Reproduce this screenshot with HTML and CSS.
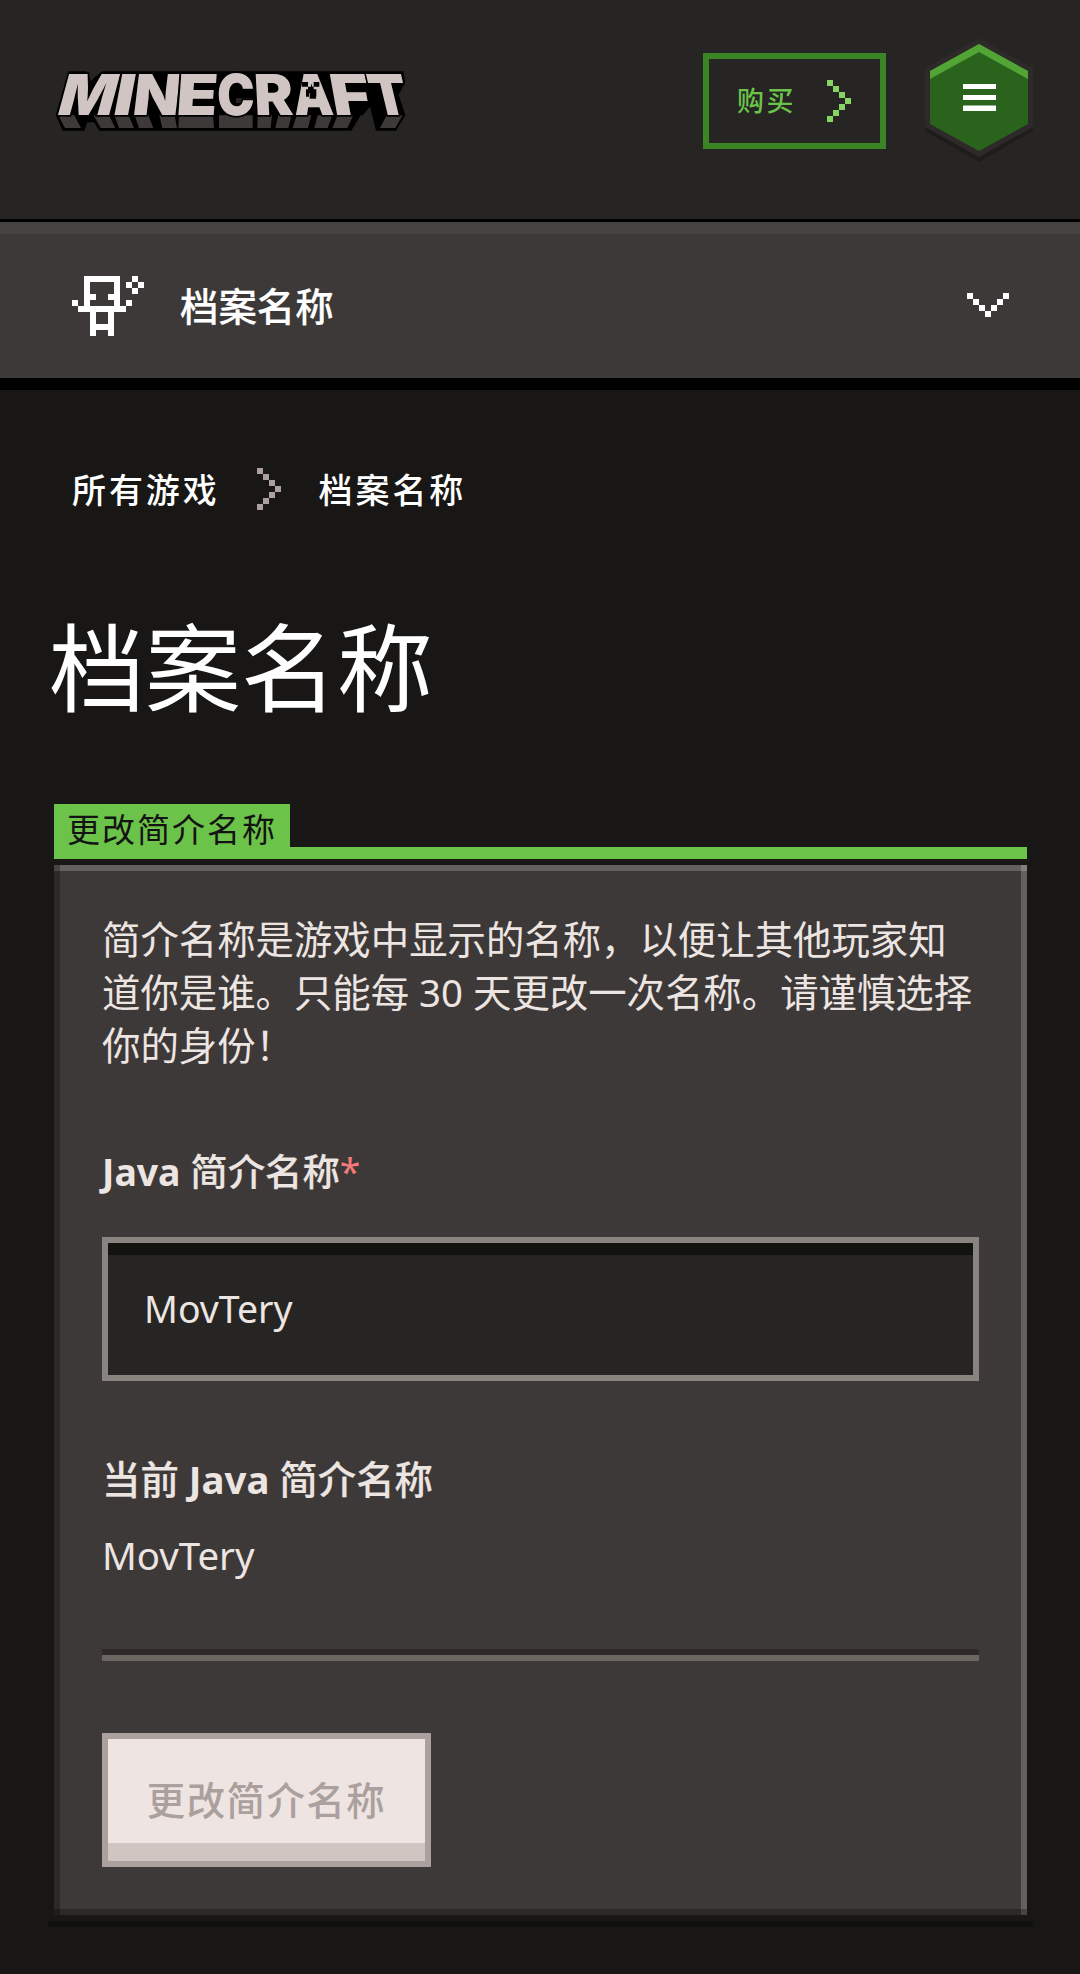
FILE: index.html
```html
<!DOCTYPE html>
<html lang="zh-CN">
<head>
<meta charset="utf-8">
<title>档案名称 | Minecraft</title>
<link rel="stylesheet" href="styles.css">
</head>
<body>
<header class="site-header">
  <a class="logo" href="#" aria-label="Minecraft">
    <svg class="logo-art" viewBox="0 0 1140 240">
      <!-- black slab behind the wordmark -->
      <path d="M86 34H140L153 63L166 50L188 34H1090L1096 66L1076 104L1096 165L1068 212H1008L990 140L968 166H962L934 212H178L162 187H142L133 212H68L47 165Z" fill="#000"/>
      <!-- lower extruded faces -->
      <g fill="#3d3938">
        <path d="M55 166H103L123 204H75ZM160 166H207L226 204H182ZM223 166H266L282 204H237ZM284 166H325L340 204H297ZM358 166H404L411 204H367ZM417 166H519L522 204H415ZM537 166H638V204H537ZM653 166H696L692 204H652ZM715 166H755L745 204H706ZM770 166H814L804 204H758ZM833 166H877L863 204H823ZM893 166H940L922 204H877ZM1040 166H1088L1066 204H1020Z"/>
      </g>
      <path d="M588 114H639V129H588Z" fill="#262523"/>
      <g class="logo-letters">
        <text transform="matrix(1 0 -.27 1 46 165)" textLength="170" lengthAdjust="spacingAndGlyphs">M</text>
        <text transform="matrix(1 0 -.19 1 214 165)" textLength="60" lengthAdjust="spacingAndGlyphs">I</text>
        <text transform="matrix(1 0 -.12 1 274 165)" textLength="141" lengthAdjust="spacingAndGlyphs">N</text>
        <text transform="matrix(1 0 -.07 1 406 165)" textLength="124" lengthAdjust="spacingAndGlyphs">E</text>
        <text transform="matrix(1 0 0 1 531 165)" textLength="113" lengthAdjust="spacingAndGlyphs">C</text>
        <text transform="matrix(1 0 .05 1 645 165)" textLength="117" lengthAdjust="spacingAndGlyphs">R</text>
        <text transform="matrix(1 0 .1 1 764 165)" textLength="120" lengthAdjust="spacingAndGlyphs">A</text>
        <text transform="matrix(1 0 .18 1 882 165)" textLength="120" lengthAdjust="spacingAndGlyphs">F</text>
        <text transform="matrix(1 0 .24 1 1003 165)" textLength="114" lengthAdjust="spacingAndGlyphs">T</text>
      </g>
      <path d="M786 66H804V80H786ZM821 66H838V80H821ZM804 80H821V88H829V110H819V100H808V110H798V88H804Z" fill="#000"/>
    </svg>
  </a>
  <div class="header-actions">
    <a class="buy" href="#"><span>购买</span>
      <svg class="arrow" viewBox="0 0 4 7" shape-rendering="crispEdges"><path fill="currentColor" d="M0 0h1v1h-1zM1 1h1v1h-1zM2 2h1v1h-1zM3 3h1v1h-1zM2 4h1v1h-1zM1 5h1v1h-1zM0 6h1v1h-1z"/></svg>
    </a>
    <button class="menu" aria-label="菜单">
      <svg viewBox="0 0 108 124">
        <path fill="#1e1d1c" d="M0 60L54 94L108 60V93L54 124L0 93Z"/>
        <path fill="#2d2a29" d="M54 0L108 30V89L54 119L0 89V30Z"/>
        <path fill="#2a641c" d="M54 6L103 33V86L54 113L5 86V33Z"/>
        <path fill="#52a535" d="M54 6L103 33V41L54 14L5 41V33Z"/>
        <path fill="#fff" d="M38 46H71V51H38ZM38 57H71V62H38ZM38 67.500H71V73H38Z"/>
      </svg>
    </button>
  </div>
</header>

<nav class="section-nav">
  <svg class="avatar" viewBox="0 0 12 10" shape-rendering="crispEdges"><path fill="#fff" d="M2 0h6v5h1v1h-2v4h-1v-1h-2v1h-1v-4h-2v-1h1zM3 1v2h1v1h-1v1h4v-1h-1v-1h1v-2zM4 6v2h2v-2zM0 4h1v1h-1zM9 4h1v1h-1zM10 0h1v1h-1zM9 1h1v1h-1zM11 1h1v1h-1zM10 2h1v1h-1z" fill-rule="evenodd"/></svg>
  <span class="section-title">档案名称</span>
  <svg class="expand" viewBox="0 0 7 4" shape-rendering="crispEdges"><path fill="#fff" d="M0 0h1v1h-1zM1 1h1v1h-1zM2 2h1v1h-1zM3 3h1v1h-1zM4 2h1v1h-1zM5 1h1v1h-1zM6 0h1v1h-1z"/></svg>
</nav>

<main>
  <div class="breadcrumb">
    <a href="#">所有游戏</a>
    <svg class="arrow" viewBox="0 0 4 7" shape-rendering="crispEdges"><path fill="currentColor" d="M0 0h1v1h-1zM1 1h1v1h-1zM2 2h1v1h-1zM3 3h1v1h-1zM2 4h1v1h-1zM1 5h1v1h-1zM0 6h1v1h-1z"/></svg>
    <a href="#">档案名称</a>
  </div>
  <h1>档案名称</h1>
  <div class="tabs"><span class="tab">更改简介名称</span></div>
  <section class="panel">
    <p class="intro">简介名称是游戏中显示的名称，以便让其他玩家知道你是谁。只能每 30 天更改一次名称。请谨慎选择你的身份！</p>
    <label class="label" for="name"><b>Java</b> 简介名称<span class="required">*</span></label>
    <input class="field" id="name" value="MovTery">
    <h2 class="label current-label">当前 <b>Java</b> 简介名称</h2>
    <div class="current">MovTery</div>
    <div class="rule"></div>
    <button class="submit" disabled>更改简介名称</button>
  </section>
  <div class="panel-shadow"></div>
</main>
</body>
</html>
```
FILE: styles.css
```css
* { box-sizing: border-box; }
body {
  margin: 0;
  min-height: 1974px;
  background: #181715;
  color: #fff;
  font: 38.4px/53px "Noto Sans", "Noto Sans CJK SC", sans-serif;
}
a { color: inherit; text-decoration: none; }
svg { display: block; flex: none; }
button { font: inherit; padding: 0; border: 0; }

.site-header {
  display: flex;
  justify-content: space-between;
  height: 222px;
  padding: 38px 47px 0 40px;
  background: #262523;
  border-bottom: 3px solid #000;
}
.logo { padding-top: 22px; }
.logo-art { width: 380px; height: 80px; }
.logo-letters {
  font: 900 169px Inter, "Liberation Sans", sans-serif;
  fill: #d0c5c3;
  stroke: #000;
  stroke-width: 10;
  paint-order: stroke;
}
.header-actions { display: flex; gap: 39px; }
.buy {
  display: flex;
  align-items: center;
  gap: 31px;
  width: 183px;
  height: 96px;
  margin-top: 15px;
  padding-left: 28px;
  border: 6px solid #3c8527;
  color: #6cc349;
  font-size: 27px;
  font-weight: 500;
  letter-spacing: 2.5px;
}
.buy span { padding-bottom: 2px; }
.arrow { width: 24px; height: 42px; }
.buy .arrow { color: #86d562; }
.menu { width: 108px; height: 124px; background: none; }

.section-nav {
  display: flex;
  align-items: center;
  height: 168px;
  padding: 0 71px 0 72px;
  background: #3d3938;
  border-top: 12px solid #454442;
  border-bottom: 12px solid #000;
}
.avatar { width: 72px; height: 60px; }
.section-title { flex: 1; margin-left: 36px; font-weight: 500; -webkit-text-stroke: .2px; }
.expand { width: 42px; height: 24px; margin-bottom: 2px; }

main { padding: 0 53px 0 54px; }
.breadcrumb {
  display: flex;
  align-items: center;
  height: 42px;
  margin: 78px 0 0 18px;
  font-size: 34px;
  font-weight: 500;
  letter-spacing: 2.9px;
}
.breadcrumb a { padding-top: 2px; }
.breadcrumb .arrow { margin: 0 38px 0 37px; color: #aba09d; }
h1 {
  margin: 85px 0 0 -5px;
  font-size: 96px;
  line-height: 144px;
  font-weight: 400;
}
.tabs {
  display: flex;
  height: 55px;
  margin: 65px 0 6px;
  border-bottom: 12px solid #6cc349;
}
.tab {
  width: 236px;
  padding-left: 13px;
  background: #6cc349;
  color: #131313;
  font-size: 33px;
  line-height: 52px;
  letter-spacing: 2px;
  white-space: nowrap;
}
.panel {
  height: 1050px;
  padding: 48px 48px 0;
  background: #3d3938;
  box-shadow:
    inset 6px 0 rgba(0, 0, 0, .28),
    inset 0 -6px rgba(0, 0, 0, .28),
    inset 0 6px rgba(255, 255, 255, .2),
    inset -6px 0 rgba(255, 255, 255, .2);
  color: #ede5e2;
}
.intro { margin: 0; }
.label { display: block; margin: 73px 0 0; font-size: 37.4px; font-weight: 500; -webkit-text-stroke: .2px; }
.label b { font-weight: 700; -webkit-text-stroke: 0; }
.required { color: #f57b7b; font-weight: 400; -webkit-text-stroke: 0; }
.field {
  display: block;
  width: 100%;
  height: 144px;
  margin-top: 39px;
  padding: 0 36px 2px;
  border: 6px solid #8a8481;
  border-radius: 0;
  background: #262523;
  box-shadow: inset 0 12px #131310;
  color: inherit;
  font: inherit;
  font-size: 37.4px;
}
.current-label { margin-top: 72px; font-size: 38.4px; }
.current { margin-top: 23px; }
.rule { height: 12px; margin-top: 67px; background: #6b6660; border-top: 6px solid #2f2a29; }
.submit {
  display: block;
  width: 329px;
  height: 134px;
  margin-top: 72px;
  background: #eee5e2;
  border: 6px solid #aba09d;
  box-shadow: inset 0 -18px #d0c5c0;
  color: #aba09d;
  font-weight: 500;
  letter-spacing: 1.500px;
}
.panel-shadow { height: 6px; margin: 6px -6px 0; background: #111110; }
```
